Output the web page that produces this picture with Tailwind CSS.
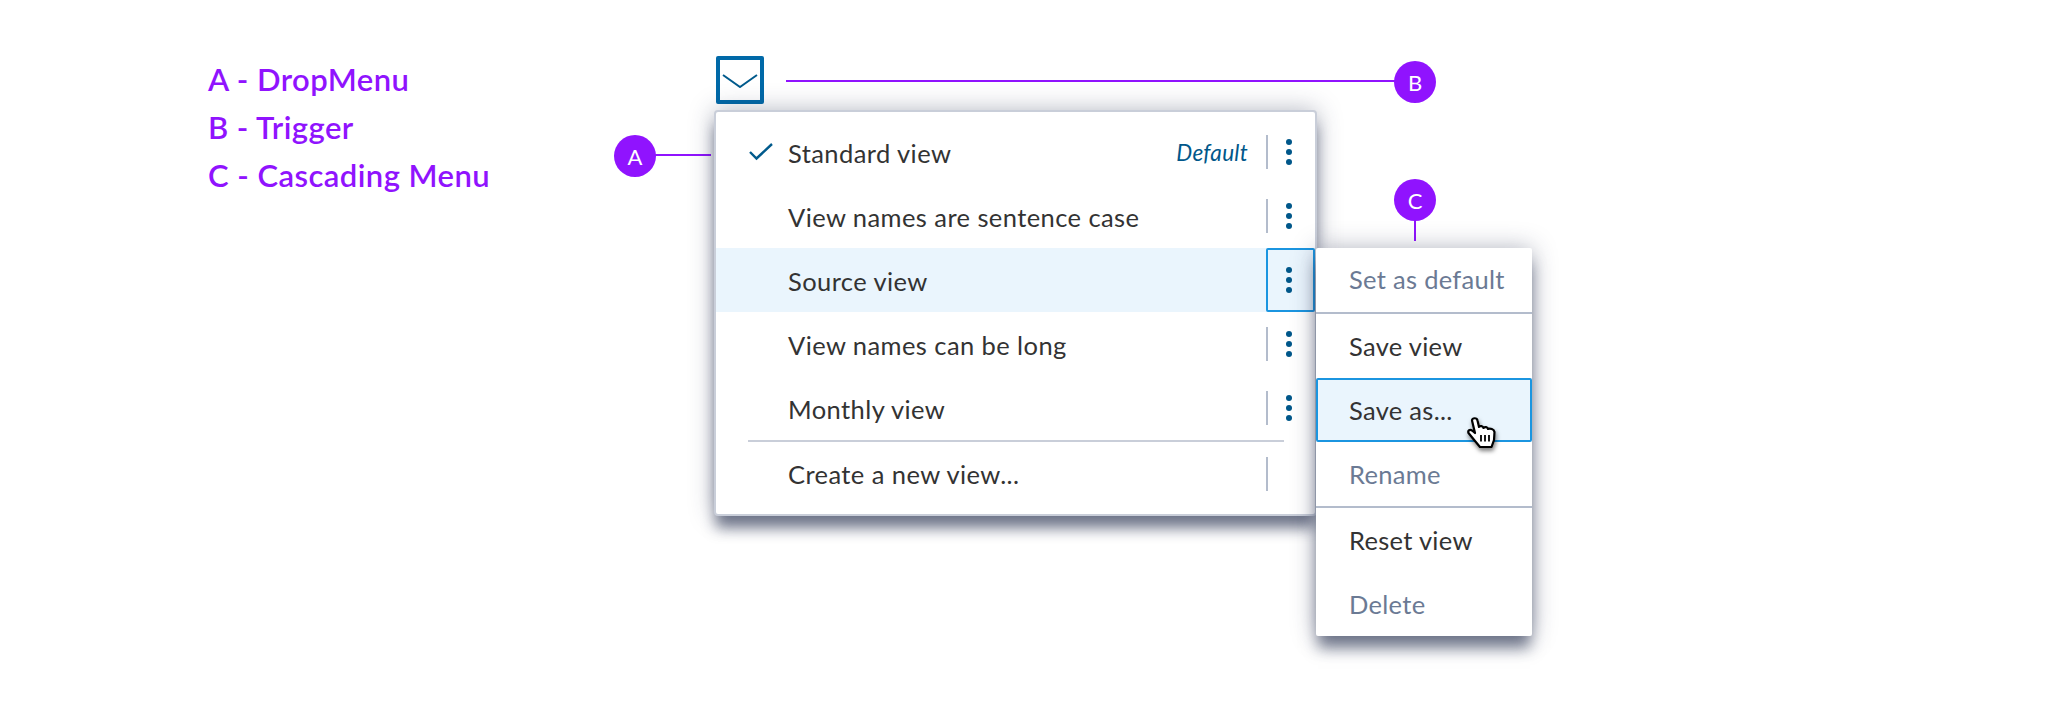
<!DOCTYPE html>
<html lang="en">
<head>
  <meta charset="UTF-8">
  <title>DropMenu anatomy</title>
  <script src="https://cdn.jsdelivr.net/npm/@tailwindcss/browser@4"></script>
</head>
<body class="bg-white">
  <div class="relative w-[2064px] h-[704px] overflow-hidden bg-white font-['Lato','Liberation_Sans',sans-serif]">

    <!-- legend -->
    <div class="flex flex-col pl-[208px] pt-[55px] text-[31px] tracking-[0.45px] leading-[48px] font-semibold text-[#9013fe]">
      <div>A - DropMenu</div>
      <div>B - Trigger</div>
      <div>C - Cascading Menu</div>
    </div>

    <!-- callouts -->
    <div class="absolute left-[614px] top-[135px] w-[42px] h-[42px] rounded-full bg-[#9013fe] text-white text-[22px] flex items-center justify-center">A</div>
    <div class="absolute left-[655px] top-[154px] w-[56px] h-[2px] bg-[#9013fe]"></div>
    <div class="absolute left-[786px] top-[80px] w-[610px] h-[2px] bg-[#9013fe]"></div>
    <div class="absolute left-[1394px] top-[61px] w-[42px] h-[42px] rounded-full bg-[#9013fe] text-white text-[22px] flex items-center justify-center">B</div>
    <div class="absolute left-[1394px] top-[179px] w-[42px] h-[42px] rounded-full bg-[#9013fe] text-white text-[22px] flex items-center justify-center">C</div>
    <div class="absolute left-[1414px] top-[220px] w-[2px] h-[21px] bg-[#9013fe]"></div>

    <!-- trigger -->
    <div class="absolute left-[716px] top-[56px] w-[48px] h-[48px] border-[4px] border-[#0069a8] rounded-[2px] flex items-center justify-center">
      <svg width="36" height="16" viewBox="0 0 36 16" fill="none" stroke="#005a8c" stroke-width="2"><path d="M1 3 L18 15 L35 3"/></svg>
    </div>

    <!-- drop menu -->
    <div class="absolute left-[714px] top-[110px] w-[603px] h-[406px] bg-white border-2 border-[#c9ced9] rounded-[4px] shadow-[0_14px_14px_-2px_rgba(40,50,80,0.6),0_0_24px_rgba(40,50,80,0.35)] pt-[8px] text-[25.5px] tracking-[0.42px] text-[#333333]">
      <div class="flex items-center h-[64px]">
        <div class="w-[72px] pl-[33px]">
          <svg class="block" width="24" height="20" viewBox="0 0 24 20" fill="none" stroke="#005a8c" stroke-width="2.4"><path d="M1 10 L7.500 16.500 L23 2"/></svg>
        </div>
        <div class="flex-1 pt-[2px]">Standard view</div>
        <div class="mr-[18px] italic text-[22.5px] tracking-[0.3px] text-[#00578a] pt-[2px]">Default</div>
        <div class="w-[2px] h-[34px] bg-[#b3bccc]"></div>
        <div class="w-[41px] mr-[6px] flex flex-col items-center gap-[4px]">
          <span class="w-[6px] h-[6px] rounded-full bg-[#00578a]"></span><span class="w-[6px] h-[6px] rounded-full bg-[#00578a]"></span><span class="w-[6px] h-[6px] rounded-full bg-[#00578a]"></span>
        </div>
      </div>
      <div class="flex items-center h-[64px]">
        <div class="flex-1 pl-[72px] pt-[2px]">View names are sentence case</div>
        <div class="w-[2px] h-[34px] bg-[#b3bccc]"></div>
        <div class="w-[41px] mr-[6px] flex flex-col items-center gap-[4px]">
          <span class="w-[6px] h-[6px] rounded-full bg-[#00578a]"></span><span class="w-[6px] h-[6px] rounded-full bg-[#00578a]"></span><span class="w-[6px] h-[6px] rounded-full bg-[#00578a]"></span>
        </div>
      </div>
      <div class="flex items-center h-[64px] bg-[#eaf5fd]">
        <div class="flex-1 pl-[72px] pt-[2px]">Source view</div>
        <div class="w-[49px] h-[64px] border-2 border-[#1b95e0] rounded-[2px] pr-[4px] flex flex-col items-center justify-center gap-[4px]">
          <span class="w-[6px] h-[6px] rounded-full bg-[#00578a]"></span><span class="w-[6px] h-[6px] rounded-full bg-[#00578a]"></span><span class="w-[6px] h-[6px] rounded-full bg-[#00578a]"></span>
        </div>
      </div>
      <div class="flex items-center h-[64px]">
        <div class="flex-1 pl-[72px] pt-[2px]">View names can be long</div>
        <div class="w-[2px] h-[34px] bg-[#b3bccc]"></div>
        <div class="w-[41px] mr-[6px] flex flex-col items-center gap-[4px]">
          <span class="w-[6px] h-[6px] rounded-full bg-[#00578a]"></span><span class="w-[6px] h-[6px] rounded-full bg-[#00578a]"></span><span class="w-[6px] h-[6px] rounded-full bg-[#00578a]"></span>
        </div>
      </div>
      <div class="flex items-center h-[64px]">
        <div class="flex-1 pl-[72px] pt-[2px]">Monthly view</div>
        <div class="w-[2px] h-[34px] bg-[#b3bccc]"></div>
        <div class="w-[41px] mr-[6px] flex flex-col items-center gap-[4px]">
          <span class="w-[6px] h-[6px] rounded-full bg-[#00578a]"></span><span class="w-[6px] h-[6px] rounded-full bg-[#00578a]"></span><span class="w-[6px] h-[6px] rounded-full bg-[#00578a]"></span>
        </div>
      </div>
      <div class="h-[2px] ml-[32px] mr-[31px] bg-[#c9ced9]"></div>
      <div class="flex items-center h-[64px]">
        <div class="flex-1 pl-[72px]">Create a new view...</div>
        <div class="w-[2px] h-[34px] bg-[#b3bccc]"></div>
        <div class="w-[47px]"></div>
      </div>
    </div>

    <!-- cascading menu -->
    <div class="absolute left-[1316px] top-[248px] w-[216px] h-[388px] bg-white rounded-[2px] shadow-[0_14px_14px_-2px_rgba(40,50,80,0.6),0_0_24px_rgba(40,50,80,0.35)] text-[25.5px] tracking-[0.3px] text-[#333333] flex flex-col">
      <div class="h-[64px] pl-[33px] pb-[2px] flex items-center text-[#6b7a94]">Set as default</div>
      <div class="h-[2px] bg-[#b3bccc]"></div>
      <div class="h-[64px] pl-[33px] flex items-center">Save view</div>
      <div class="h-[64px] pl-[31px] flex items-center bg-[#eaf5fd] border-2 border-[#1b95e0] rounded-[2px]">Save as...</div>
      <div class="h-[64px] pl-[33px] flex items-center text-[#6b7a94]">Rename</div>
      <div class="h-[2px] bg-[#b3bccc]"></div>
      <div class="h-[64px] pl-[33px] flex items-center">Reset view</div>
      <div class="h-[64px] pl-[33px] flex items-center text-[#6b7a94]">Delete</div>
    </div>

    <!-- pointer -->
    <svg class="absolute left-[1467px] top-[417px] drop-shadow-[1px_3px_2px_rgba(0,0,0,0.5)]" width="30" height="32" viewBox="0 0 30 32">
      <path d="M5 3.500C5 .5 10 .5 10.500 3.500L12 10C13 8.500 16 9 16.500 11C18 9.500 20.500 10 21 12C23 11 27 12 27.500 15L27 23L24.500 30L13 30L8 24L1.500 16C.5 13.500 3 12 5 13.500L8 16Z" fill="#fff" stroke="#000" stroke-width="2.200" stroke-linejoin="round"/>
      <path d="M14 18v6.500M18 18v6.500M22 18v6.500" stroke="#000" stroke-width="1.800"/>
    </svg>
  </div>
</body>
</html>
